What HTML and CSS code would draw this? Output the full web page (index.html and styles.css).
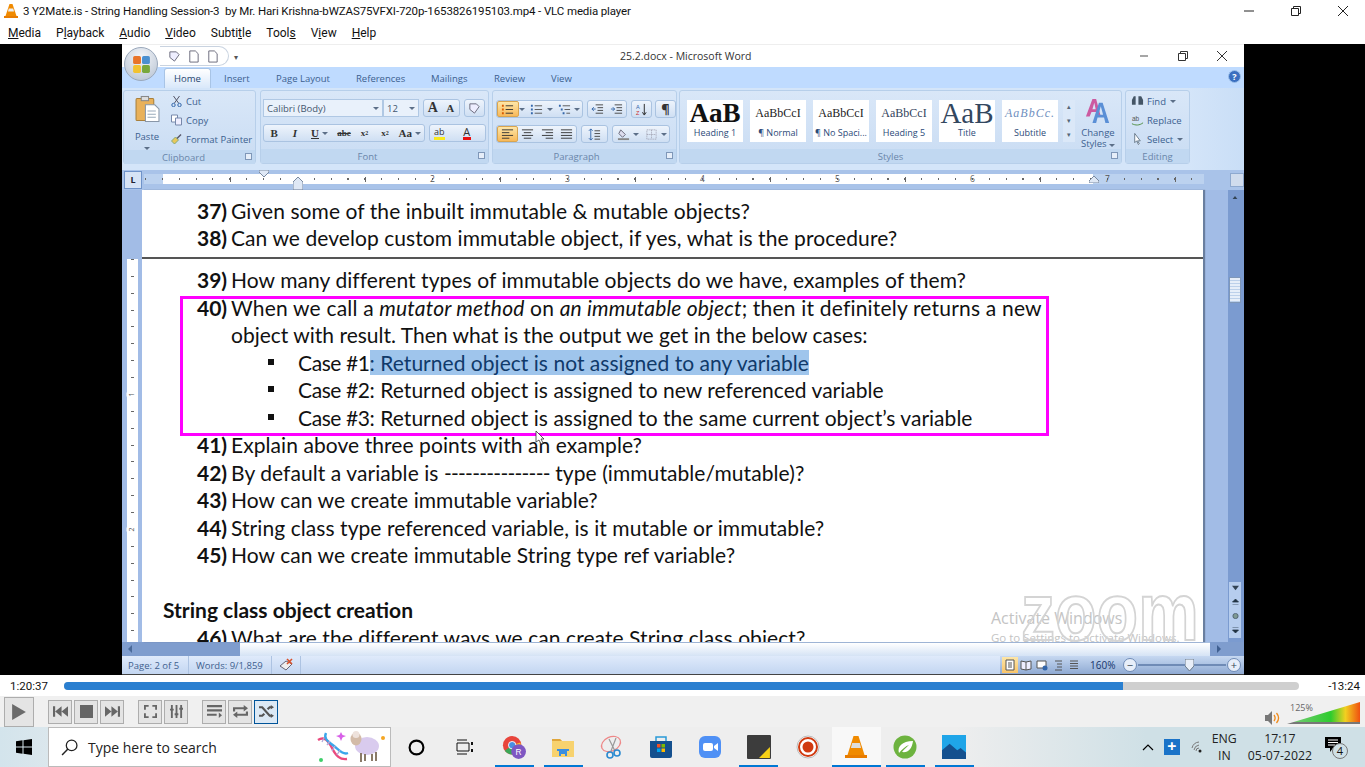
FILE: index.html
```html
<!DOCTYPE html>
<html lang="en">
<head>
    <meta charset="UTF-8">
    <meta name="viewport" content="width=device-width, initial-scale=1.0">
    <title>VLC media player</title>
    <link rel="stylesheet" href="styles.css">
</head>
<body>

    <div class="title-bar">
        <svg class="cone" viewBox="0 0 16 16"><path d="M6.5 1h3l4 12h-11z" fill="#f08a00"/><path d="M5.8 5.5h4.4l.8 3h-6z" fill="#eee"/><path d="M1 13h14v2H1z" fill="#e87c00"/></svg>
        <span class="title-text">3 Y2Mate.is - String Handling Session-3 &nbsp;by Mr. Hari Krishna-bWZAS75VFXI-720p-1653826195103.mp4 - VLC media player</span>
        <div class="win-btns">
            <svg viewBox="0 0 12 12"><path d="M1 6h10" stroke="#222"/></svg>
            <svg viewBox="0 0 12 12"><path d="M1.5 3.5h7v7h-7zM3.5 3.5v-2h7v7h-2" fill="none" stroke="#222"/></svg>
            <svg viewBox="0 0 12 12"><path d="M1 1l10 10M11 1L1 11" stroke="#222"/></svg>
        </div>
    </div>
    <nav class="menu-bar">
        <span><u>M</u>edia</span>
        <span>P<u>l</u>ayback</span>
        <span><u>A</u>udio</span>
        <span><u>V</u>ideo</span>
        <span>Subti<u>t</u>le</span>
        <span>Tool<u>s</u></span>
        <span>V<u>i</u>ew</span>
        <span><u>H</u>elp</span>
    </nav>

    <div class="video">
        <div class="word">
            <div class="word-title">
                <div class="office-btn">
                    <svg viewBox="0 0 20 20"><rect x="2" y="2" width="7.5" height="7.5" rx="1.5" fill="#e8742a"/><rect x="10.5" y="2" width="7.5" height="7.5" rx="1.5" fill="#4a8fd0"/><rect x="2" y="10.5" width="7.5" height="7.5" rx="1.5" fill="#f2c230"/><rect x="10.5" y="10.5" width="7.5" height="7.5" rx="1.5" fill="#78a83c"/></svg>
                </div>
                <div class="qat">
                    <svg viewBox="0 0 14 14"><path d="M2 2h7l3 3-5 7-5-4z" fill="#eef" stroke="#667"/></svg>
                    <svg viewBox="0 0 14 14"><path d="M3 1h6l3 3v9H3z" fill="#fff" stroke="#667"/></svg>
                    <svg viewBox="0 0 14 14"><path d="M3 1h6l3 3v9H3z" fill="#fff" stroke="#667"/></svg>
                </div>
                <span class="qat-more">&#9662;</span>
                <span class="doc-name">25.2.docx - Microsoft Word</span>
                <div class="word-btns">
                    <svg viewBox="0 0 12 12"><path d="M2 6h8" stroke="#888" stroke-width="1.5"/></svg>
                    <svg viewBox="0 0 12 12"><path d="M1.5 3.5h7v7h-7zM3.5 3.5v-2h7v7h-2" fill="none" stroke="#333"/></svg>
                    <svg viewBox="0 0 12 12"><path d="M1 1l10 10M11 1L1 11" stroke="#333"/></svg>
                </div>
            </div>

            <div class="tabs">
                <span class="tab active">Home</span>
                <span class="tab t-insert">Insert</span>
                <span class="tab t-layout">Page Layout</span>
                <span class="tab t-refs">References</span>
                <span class="tab t-mail">Mailings</span>
                <span class="tab t-review">Review</span>
                <span class="tab t-view">View</span>
                <span class="help">?</span>
            </div>

            <div class="ribbon">
                <section class="group g-clip">
                    <div class="group-body clip-body">
                        <div class="paste">
                            <svg viewBox="0 0 24 26"><rect x="1" y="3" width="17" height="21" rx="1" fill="#e9b15a" stroke="#a9803c"/><rect x="6" y="1" width="7" height="4" fill="#ddd" stroke="#888"/><path d="M10 9h9l4 4v12H10z" fill="#fff" stroke="#8896a8"/><path d="M12 15h8M12 18h8M12 21h8" stroke="#9ab"/></svg>
                            <span>Paste</span>
                            <i class="arrow"></i>
                        </div>
                        <div class="clip-list">
                            <span><svg viewBox="0 0 12 12"><path d="M3 1l5 7M9 1L4 8" stroke="#556"/><circle cx="3" cy="10" r="1.7" fill="none" stroke="#36a"/><circle cx="9" cy="10" r="1.7" fill="none" stroke="#36a"/></svg>Cut</span>
                            <span><svg viewBox="0 0 12 12"><path d="M1 1h6v7H1z" fill="#fff" stroke="#78a"/><path d="M5 4h6v7H5z" fill="#eef" stroke="#78a"/></svg>Copy</span>
                            <span><svg viewBox="0 0 12 12"><path d="M1 8l4-4 3 3-4 4z" fill="#e9c85a" stroke="#8a7"/><path d="M6 5l4-4 1 1-4 4z" fill="#556"/></svg>Format Painter</span>
                        </div>
                    </div>
                    <div class="group-label pad-clip">Clipboard<i class="launcher"></i></div>
                </section>

                <section class="group g-font">
                    <div class="group-body rows">
                        <div class="row">
                            <div class="combo c-name">Calibri (Body)<i class="arrow"></i></div>
                            <div class="combo c-size">12<i class="arrow"></i></div>
                            <div class="tb f-grow"><span class="tb-btn serif big">A</span><span class="tb-btn serif">A</span></div>
                            <div class="tb f-clear"><span class="tb-btn"><svg viewBox="0 0 14 14"><path d="M2 2h7l3 3-5 7-5-4z" fill="#eef" stroke="#667"/></svg></span></div>
                        </div>
                        <div class="row">
                            <div class="tb f-style">
                                <span class="tb-btn serif"><b>B</b></span>
                                <span class="tb-btn serif"><i>I</i></span>
                                <span class="tb-btn serif wide"><u>U</u>&nbsp;<i class="arrow"></i></span>
                                <span class="tb-btn serif small"><s>abe</s></span>
                                <span class="tb-btn serif small">x<sub>2</sub></span>
                                <span class="tb-btn serif small">x<sup>2</sup></span>
                                <span class="tb-btn serif wide">Aa&nbsp;<i class="arrow"></i></span>
                            </div>
                            <div class="tb f-color">
                                <span class="tb-btn hl">ab</span>
                                <span class="tb-btn fc">A</span>
                            </div>
                        </div>
                    </div>
                    <div class="group-label pad-font">Font<i class="launcher"></i></div>
                </section>

                <section class="group g-para">
                    <div class="group-body rows para-rows">
                        <div class="row">
                            <div class="tb p-lists">
                                <span class="tb-btn on"><svg viewBox="0 0 14 14"><path d="M1 3h2M1 7h2M1 11h2" stroke="#d85a00" stroke-width="2"/><path d="M5 3h8M5 7h8M5 11h8" stroke="#333"/></svg></span>
                                <i class="arrow list-arrow"></i>
                                <span class="tb-btn"><svg viewBox="0 0 14 14"><path d="M1 3h2M1 7h2M1 11h2" stroke="#36a" stroke-width="2"/><path d="M5 3h8M5 7h8M5 11h8" stroke="#555"/></svg></span>
                                <i class="arrow list-arrow"></i>
                                <span class="tb-btn"><svg viewBox="0 0 14 14"><path d="M1 3h2M3 7h2M5 11h2" stroke="#36a" stroke-width="2"/><path d="M5 3h8M7 7h6M9 11h4" stroke="#555"/></svg></span>
                                <i class="arrow list-arrow"></i>
                            </div>
                            <div class="tb p-indent">
                                <span class="tb-btn"><svg viewBox="0 0 14 14"><path d="M5 2h8M7 5h6M7 8h6M5 11h8" stroke="#444"/><path d="M5 6.5L1 6.5M3 4.5l-2 2 2 2" stroke="#36a" fill="none"/></svg></span>
                                <span class="tb-btn"><svg viewBox="0 0 14 14"><path d="M5 2h8M7 5h6M7 8h6M5 11h8" stroke="#444"/><path d="M1 6.5h4M3 4.5l2 2-2 2" stroke="#36a" fill="none"/></svg></span>
                            </div>
                            <div class="tb p-sort"><span class="tb-btn"><svg viewBox="0 0 14 14"><text x="1" y="6" font-size="6" fill="#36a" font-family="Liberation Sans">A</text><text x="1" y="13" font-size="6" fill="#c33" font-family="Liberation Sans">Z</text><path d="M10 1v11M8 10l2 3 2-3" stroke="#222" fill="none"/></svg></span></div>
                            <div class="tb p-mark"><span class="tb-btn pilcrow">&para;</span></div>
                        </div>
                        <div class="row">
                            <div class="tb p-align">
                                <span class="tb-btn on"><svg viewBox="0 0 14 14"><path d="M1 2h12M1 5h8M1 8h12M1 11h8" stroke="#333"/></svg></span>
                                <span class="tb-btn"><svg viewBox="0 0 14 14"><path d="M1 2h12M3 5h8M1 8h12M3 11h8" stroke="#333"/></svg></span>
                                <span class="tb-btn"><svg viewBox="0 0 14 14"><path d="M1 2h12M5 5h8M1 8h12M5 11h8" stroke="#333"/></svg></span>
                                <span class="tb-btn"><svg viewBox="0 0 14 14"><path d="M1 2h12M1 5h12M1 8h12M1 11h12" stroke="#333"/></svg></span>
                            </div>
                            <div class="tb p-space"><span class="tb-btn"><svg viewBox="0 0 14 14"><path d="M3 1v12M1 3l2-2 2 2M1 11l2 2 2-2" stroke="#36a" fill="none"/><path d="M7 3h6M7 6h6M7 9h6M7 12h6" stroke="#444"/></svg></span></div>
                            <div class="tb p-shade">
                                <span class="tb-btn"><svg viewBox="0 0 14 14"><path d="M4 2l5 5-3 3-4-4z" fill="#dde" stroke="#667"/><path d="M1 12h12" stroke="#888" stroke-width="2"/></svg></span>
                                <i class="arrow list-arrow"></i>
                                <span class="tb-btn"><svg viewBox="0 0 14 14"><path d="M2 2h10v10H2zM7 2v10M2 7h10" fill="none" stroke="#99a" stroke-dasharray="1 1"/></svg></span>
                                <i class="arrow list-arrow"></i>
                            </div>
                        </div>
                    </div>
                    <div class="group-label pad-para">Paragraph<i class="launcher"></i></div>
                </section>

                <section class="group g-styles">
                    <div class="group-body styles-body">
                        <div class="gallery">
                            <div class="swatch"><span class="s-h1">AaB</span><small>Heading 1</small></div>
                            <div class="swatch"><span class="s-n">AaBbCcI</span><small>&para; Normal</small></div>
                            <div class="swatch"><span class="s-n">AaBbCcI</span><small>&para; No Spaci...</small></div>
                            <div class="swatch"><span class="s-n s-h5">AaBbCcI</span><small>Heading 5</small></div>
                            <div class="swatch"><span class="s-title">AaB</span><small>Title</small></div>
                            <div class="swatch"><span class="s-sub">AaBbCc.</span><small>Subtitle</small></div>
                        </div>
                        <div class="gal-scroll"><i>&#9652;</i><i>&#9662;</i><i>&#9662;</i></div>
                        <div class="change">
                            <svg viewBox="0 0 28 28"><path fill-rule="evenodd" d="M1 20L8 1h4l5 19h-4l-1-5H7l-2 5zM8 12h3.500L10 5z" fill="#cc5aa0"/><path fill-rule="evenodd" d="M8 27L15 5h4l7 22h-4l-1.500-6h-7L12 27zM14.500 18h5L17 9z" fill="#5a8fd6"/></svg>
                            <span>Change</span>
                            <span>Styles <i class="arrow"></i></span>
                        </div>
                    </div>
                    <div class="group-label pad-styles">Styles<i class="launcher"></i></div>
                </section>

                <section class="group g-edit">
                    <div class="group-body edit-list">
                        <span><svg viewBox="0 0 14 12"><path d="M1 10V5l2-4h2v9zM8 10V1h3l2 4v5z" fill="#456" /></svg>Find <i class="arrow"></i></span>
                        <span><svg viewBox="0 0 14 12"><path d="M1 10c4 2 8 2 12-1" stroke="#4a8a3a" fill="none"/><text x="1" y="7" font-size="7" fill="#555" font-family="Liberation Sans">ab</text></svg>Replace</span>
                        <span><svg viewBox="0 0 14 12"><path d="M4 0v10l2-2 2 4 1-1-2-3h3z" fill="#fff" stroke="#678"/></svg>Select <i class="arrow"></i></span>
                    </div>
                    <div class="group-label">Editing</div>
                </section>
            </div>

            <div class="ruler-row">
                <span class="tab-stop">L</span>
                <div class="ruler">
                    <span>2</span><span>3</span><span>4</span><span>5</span><span>6</span><span>7</span>
                    <svg class="mark m-first" viewBox="0 0 10 7"><path d="M0 0h10v2L5 7 0 2z" fill="#dfe8f5" stroke="#7a8aa0"/></svg>
                    <svg class="mark m-left" viewBox="0 0 10 13"><path d="M5 0l5 5v8H0V5z" fill="#dfe8f5" stroke="#7a8aa0"/></svg>
                    <svg class="mark m-right" viewBox="0 0 10 7"><path d="M5 0l5 5v2H0V5z" fill="#dfe8f5" stroke="#7a8aa0"/></svg>
                </div>
                <span class="view-ruler"></span>
            </div>

            <div class="doc-row">
                <div class="v-ruler"><span class="v1">1</span><span class="v2">2</span></div>
                <div class="doc">
                    <div class="page-end">
                        <p class="q"><b>37)</b><span>Given some of the inbuilt immutable &amp; mutable objects?</span></p>
                        <p class="q"><b>38)</b><span>Can we develop custom immutable object, if yes, what is the procedure?</span></p>
                    </div>
                    <div class="page-start">
                        <p class="q"><b>39)</b><span>How many different types of immutable objects do we have, examples of them?</span></p>
                        <p class="q"><b>40)</b><span><span class="stretch">When we call a <i>mutator method</i> on <i>an immutable object</i>; then it definitely returns a new</span><br><span class="tight">object with result. Then what is the output we get in the below cases:</span></span></p>
                        <ul class="cases">
                            <li><span class="case-no">Case #1</span><mark>: Returned object is not assigned to any variable</mark></li>
                            <li><span class="case-no">Case #2</span>: Returned object is assigned to new referenced variable</li>
                            <li><span class="case-no">Case #3</span>: Returned object is assigned to the same current object&rsquo;s variable</li>
                        </ul>
                        <p class="q"><b>41)</b><span>Explain above three points with an example?</span></p>
                        <p class="q"><b>42)</b><span>By default a variable is <span class="dashes">---------------</span> type (immutable/mutable)?</span></p>
                        <p class="q"><b>43)</b><span>How can we create immutable variable?</span></p>
                        <p class="q"><b>44)</b><span>String class type referenced variable, is it mutable or immutable?</span></p>
                        <p class="q"><b>45)</b><span>How can we create immutable String type ref variable?</span></p>
                        <h2 class="doc-head">String class object creation</h2>
                        <p class="q"><b>46)</b><span>What are the different ways we can create String class object?</span></p>
                    </div>
                    <div class="pink-box"></div>
                    <svg class="doc-cursor" viewBox="0 0 10 15"><path d="M1 1v11l3-2 2 4 2-1-2-4h3z" fill="#fff" stroke="#333" stroke-width=".8"/></svg>
                    <div class="activate">Activate Windows<small>Go to Settings to activate Windows.</small></div>
                    <div class="zoom-mark">zoom</div>
                </div>
                <div class="gutter"></div>
                <div class="v-scroll">
                    <svg class="vs-top" viewBox="0 0 8 5"><path d="M0 5l4-5 4 5z" fill="#345"/></svg>
                    <div class="vs-thumb"></div>
                    <div class="vs-bottom">
                        <svg viewBox="0 0 8 5"><path d="M0 0l4 5 4-5z" fill="#345"/></svg>
                        <svg viewBox="0 0 8 8"><path d="M0 4l4-4 4 4zM0 8h8" fill="#234" stroke="#234"/></svg>
                        <svg viewBox="0 0 8 8"><circle cx="4" cy="4" r="3.5" fill="#7e9a94" stroke="#456"/></svg>
                        <svg viewBox="0 0 8 8"><path d="M0 4l4 4 4-4zM0 0h8" fill="#234" stroke="#234"/></svg>
                    </div>
                </div>
            </div>

            <div class="h-scroll">
                <div class="hs-left"><i></i></div>
                <div class="hs-thumb"></div>
                <div class="hs-right"><i></i></div>
            </div>

            <div class="status">
                <span class="st-cell st-page">Page: 2 of 5</span>
                <span class="st-cell st-words">Words: 9/1,859</span>
                <span class="st-cell st-check"><svg viewBox="0 0 16 14"><path d="M2 8l6-5 6 3-6 6z" fill="#eee" stroke="#667"/><path d="M9 1l5 5M14 1L9 6" stroke="#d8502a" stroke-width="1.6"/></svg></span>
                <div class="st-right">
                    <div class="views">
                        <span class="on"><svg viewBox="0 0 12 12"><path d="M2 1h8v10H2zM4 4h4M4 6h4M4 8h4" fill="#fff" stroke="#555"/></svg></span>
                        <span><svg viewBox="0 0 12 12"><path d="M1 2l5 1 5-1v8l-5 1-5-1zM6 3v8" fill="#eef" stroke="#555"/></svg></span>
                        <span><svg viewBox="0 0 12 12"><path d="M1 2h9v7H1z" fill="#fff" stroke="#555"/><circle cx="9" cy="9" r="2.5" fill="#36a"/></svg></span>
                        <span><svg viewBox="0 0 12 12"><path d="M3 2h7M5 5h5M5 8h5M3 11h7" stroke="#555"/></svg></span>
                        <span><svg viewBox="0 0 12 12"><path d="M2 2h8M2 4.5h8M2 7h8M2 9.500h8" stroke="#555"/></svg></span>
                    </div>
                    <span class="zoom-pct">160%</span>
                    <span class="zoom-round">&minus;</span>
                    <div class="zoom-track"><svg viewBox="0 0 9 12"><path d="M0 0h9v7l-4.500 5L0 7z" fill="#e8eef8" stroke="#678"/></svg></div>
                    <span class="zoom-round">+</span>
                </div>
            </div>
        </div>
    </div>

    <div class="seek-row">
        <span class="time">1:20:37</span>
        <div class="seek"><div class="seek-fill"></div></div>
        <span class="time remain">-13:24</span>
    </div>

    <div class="controls">
        <span class="ctl play"><svg viewBox="0 0 14 14"><path d="M1 0l12 7-12 7z" fill="#6b6b6b"/></svg></span>
        <div class="ctl-group">
            <span class="ctl"><svg viewBox="0 0 14 10"><path d="M0 0h2v10H0zM8 0v10L2 5zM14 0v10L8 5z" fill="#666"/></svg></span>
            <span class="ctl"><svg viewBox="0 0 10 10"><path d="M0 0h10v10H0z" fill="#666"/></svg></span>
            <span class="ctl"><svg viewBox="0 0 14 10"><path d="M12 0h2v10h-2zM6 0v10l6-5zM0 0v10l6-5z" fill="#666"/></svg></span>
        </div>
        <div class="ctl-group">
            <span class="ctl"><svg viewBox="0 0 14 14"><path d="M1 5V1h4M9 1h4v4M13 9v4H9M5 13H1V9" fill="none" stroke="#666" stroke-width="2"/></svg></span>
            <span class="ctl"><svg viewBox="0 0 16 14"><path d="M3 0v14M8 0v14M13 0v14" stroke="#666" stroke-width="2"/><path d="M1 4h4v2H1zM6 9h4v2H6zM11 3h4v2h-4z" fill="#666"/></svg></span>
        </div>
        <div class="ctl-group">
            <span class="ctl"><svg viewBox="0 0 14 12"><path d="M0 1h14M0 5h14M0 9h9" stroke="#666" stroke-width="2"/><path d="M11 7l3 2.500-3 2.500z" fill="#666"/></svg></span>
            <span class="ctl"><svg viewBox="0 0 14 12"><path d="M1 6V3h10M13 6v3H3" fill="none" stroke="#666" stroke-width="2"/><path d="M10 0l4 3-4 3zM4 6l-4 3 4 3z" fill="#666"/></svg></span>
            <span class="ctl ctl-on"><svg viewBox="0 0 14 12"><path d="M0 2h3l7 8h2M0 10h3l2-2M8 4l2-2h2" fill="none" stroke="#555" stroke-width="2"/><path d="M11 0l3 2-3 2zM11 8l3 2-3 2z" fill="#555"/></svg></span>
        </div>
        <div class="volume">
            <svg class="spk" viewBox="0 0 15 14"><path d="M0 4h3l4-4v14l-4-4H0z" fill="#777"/><path d="M9 4c1.500 2 1.500 4 0 6M11.500 2c2.500 3 2.500 7 0 10" fill="none" stroke="#ef8a1a" stroke-width="1.300"/></svg>
            <div class="vol-wrap">
                <span class="vol-pct">125%</span>
                <div class="vol-bar"></div>
            </div>
        </div>
    </div>

    <footer class="taskbar">
        <div class="start">
            <svg viewBox="0 0 16 16"><path d="M0 2.200L6.500 1.300V7.500H0zM7.500 1.200L16 0V7.500H7.500zM0 8.500H6.500V14.700L0 13.800zM7.500 8.500H16V16L7.500 14.800z" fill="#000"/></svg>
        </div>
        <div class="search">
            <svg viewBox="0 0 16 16"><circle cx="10" cy="6" r="5" fill="none" stroke="#222" stroke-width="1.200"/><path d="M6.500 9.500L1 15" stroke="#222" stroke-width="1.400"/></svg>
            <span>Type here to search</span>
            <svg class="doodle" viewBox="0 0 68 32">
                <path d="M1 9c6-4 10 0 14 8s8 12 15 11" stroke="#ea4a7e" stroke-width="2.400" fill="none"/>
                <path d="M9 2c-3 6 3 9 8 13s9 9 14 7" stroke="#3aa6ea" stroke-width="2.400" fill="none"/>
                <path d="M7 7l-2 4M13 10l-3 4M18 15l-3 5M23 19l-3 5" stroke="#b5a8d8" stroke-width="1.300"/>
                <path d="M24 1l1.500 3L29 5l-3.500 1.500L24 10l-1.500-3.500L19 5l3.500-1z" fill="#d860e8"/>
                <circle cx="4" cy="29" r="2" fill="#3ecf6a"/>
                <ellipse cx="50" cy="15" rx="12" ry="9" fill="#d9cbee"/>
                <ellipse cx="39" cy="8" rx="5.500" ry="6.500" fill="#d3bba8"/>
                <circle cx="39" cy="3.500" r="3.500" fill="#eee2dc"/>
                <path d="M44 22v9M48 23v7M55 23v7M59 21v9" stroke="#8a7a68" stroke-width="2"/>
                <circle cx="66" cy="7" r="2" fill="#f5a623"/>
            </svg>
        </div>
        <div class="task-icons">
            <span class="task"><svg class="ring" viewBox="0 0 16 16"><circle cx="8" cy="8" r="6.500" fill="none" stroke="#000" stroke-width="2"/></svg></span>
            <span class="task"><svg class="task-view" viewBox="0 0 18 16"><path d="M1 1h10M1 4h12v8H1zM1 15h10" fill="none" stroke="#111"/><path d="M15 3h2v3h-2zM15 10h2v3h-2z" fill="#111"/></svg></span>
            <span class="task on"><svg viewBox="0 0 26 26"><circle cx="11" cy="11" r="10" fill="#e8453c"/><path d="M11 11L3 17a10 10 0 0 0 9 4z" fill="#3aa757"/><path d="M11 11l9-3a10 10 0 0 1-6 12z" fill="#fbc02d"/><circle cx="11" cy="11" r="4" fill="#4a90e2" stroke="#fff"/><circle cx="18" cy="18" r="8" fill="#7e57c2"/><text x="18" y="21.500" font-size="9" fill="#fff" text-anchor="middle" font-family="Liberation Sans">R</text></svg></span>
            <span class="task on part"><svg viewBox="0 0 24 22"><path d="M1 3h8l2 2h12v16H1z" fill="#f7d26e"/><path d="M1 3h8l2 2H1z" fill="#e0a63a"/><path d="M8 15h8v5h-2v-2h-4v2H8z" fill="#3a8ee0"/><path d="M6 13h12v2H6z" fill="#3a8ee0"/></svg></span>
            <span class="task"><svg viewBox="0 0 24 24"><ellipse cx="11" cy="9" rx="10" ry="7" fill="none" stroke="#e88" stroke-width="1.200" transform="rotate(-25 11 9)"/><path d="M9 4l6 12M16 3l-5 13" stroke="#999" stroke-width="1.200"/><circle cx="17" cy="18" r="3" fill="none" stroke="#2a8ad0" stroke-width="1.600"/><circle cx="10" cy="20" r="3" fill="none" stroke="#2a8ad0" stroke-width="1.600"/></svg></span>
            <span class="task"><svg viewBox="0 0 24 24"><path d="M1 6h22v15a2 2 0 0 1-2 2H3a2 2 0 0 1-2-2z" fill="#14508e"/><path d="M7 6V2h10v4" fill="none" stroke="#2a9ad8" stroke-width="1.500"/><path d="M8 9h3.500v3.500H8z" fill="#f25022"/><path d="M12.500 9H16v3.500h-3.500z" fill="#7fba00"/><path d="M8 13.500h3.500V17H8z" fill="#00a4ef"/><path d="M12.500 13.500H16V17h-3.500z" fill="#ffb900"/></svg></span>
            <span class="task"><svg viewBox="0 0 24 24"><rect x="1" y="1" width="22" height="22" rx="6" fill="#4f90f5"/><rect x="5" y="8" width="10" height="8" rx="2" fill="#fff"/><path d="M16 11l4-3v8l-4-3z" fill="#fff"/></svg></span>
            <span class="task on part"><svg viewBox="0 0 22 22"><rect width="22" height="22" rx="1" fill="#3c3c3c"/><path d="M21 11v10H11z" fill="#f7d117"/></svg></span>
            <span class="task"><svg viewBox="0 0 24 24"><circle cx="12" cy="12" r="11" fill="#fff" stroke="#bbb"/><circle cx="12" cy="12" r="9" fill="none" stroke="#d03a10" stroke-width="2"/><circle cx="12" cy="12" r="5.500" fill="#d03a10"/></svg></span>
            <span class="task on active"><svg viewBox="0 0 22 24"><path d="M8.500 1h5l6 19h-17z" fill="#f08a00"/><path d="M7.200 8h7.600l1.300 5H5.900z" fill="#ddd"/><path d="M0 20h22v3H0z" fill="#e87c00"/></svg></span>
            <span class="task on"><svg viewBox="0 0 24 24"><circle cx="12" cy="12" r="11.500" fill="#6db33f"/><path d="M6 18c-2-6 3-12 14-12-1 8-5 12-11 11 2-3 5-5 7-7-3 1-7 4-10 8z" fill="#fff"/></svg></span>
            <span class="task on"><svg viewBox="0 0 22 22"><rect width="22" height="22" fill="#1fa5e8"/><path d="M0 22V14l7-6 7 6 3-2 5 4v6z" fill="#14508e"/></svg></span>
        </div>
        <div class="tray">
            <svg class="caret" viewBox="0 0 12 7"><path d="M1 6l5-5 5 5" fill="none" stroke="#000" stroke-width="1.200"/></svg>
            <span class="plus">+</span>
            <svg class="wifi" viewBox="0 0 14 14"><path d="M1 8a8 8 0 0 1 7-6M3 10a6 6 0 0 1 5-5M5 11a3 3 0 0 1 3-3" fill="none" stroke="#777"/><circle cx="9" cy="11" r="1.500" fill="#222"/></svg>
            <div class="tray-text lang"><span>ENG</span><span>IN</span></div>
            <div class="tray-text clock"><span>17:17</span><span>05-07-2022</span></div>
            <div class="notify">
                <svg viewBox="0 0 16 16"><path d="M0 0h16v11H8l-3 4v-4H0z" fill="#000"/><path d="M3 3h10M3 5.500h10M3 8h7" stroke="#fff"/></svg>
                <span class="badge">4</span>
            </div>
        </div>
    </footer>

</body>
</html>
```

FILE: styles.css
```css
* {
    box-sizing: border-box;
}

html, body {
    margin: 0;
    width: 1365px;
    height: 767px;
    overflow: hidden;
}

body {
    font-family: "Open Sans", "Liberation Sans", sans-serif;
    font-size: 12px;
    background-color: #f0f0f0;
    color: #111;
}

svg {
    display: block;
}

/* vlc window top */
.title-bar {
    display: flex;
    align-items: center;
    height: 22px;
    background-color: #fff;
    padding-left: 3px;
    font-family: "Roboto", sans-serif;
}

.cone {
    width: 16px;
    height: 16px;
    margin-right: 4px;
}

.title-text {
    font-size: 11.500px;
    letter-spacing: -.12px;
    white-space: pre;
}

.win-btns {
    display: flex;
    margin-left: auto;
    gap: 35px;
    padding-right: 16px;
}

.win-btns svg {
    width: 12px;
    height: 12px;
}

.menu-bar {
    display: flex;
    align-items: center;
    gap: 15px;
    height: 22px;
    background-color: #fff;
    padding-left: 8px;
    font-family: "Roboto", sans-serif;
    font-size: 12px;
}

/* video area */
.video {
    display: flex;
    justify-content: flex-start;
    height: 631px;
    background-color: #000;
    padding-left: 122px;
}

.word {
    display: flex;
    flex-direction: column;
    width: 1122px;
    height: 631px;
    background-color: #bfdbff;
}

.word-title {
    display: flex;
    align-items: center;
    position: relative;
    height: 23px;
    flex-shrink: 0;
    background-color: #fff;
    border-top: 1px solid #eee;
}

.office-btn {
    position: absolute;
    left: 2px;
    top: 2px;
    width: 34px;
    height: 34px;
    display: flex;
    align-items: center;
    justify-content: center;
    border-radius: 50%;
    background: radial-gradient(circle at 50% 30%, #f4f6fa, #b4c0d0);
    border: 1px solid #9aa8bb;
    z-index: 2;
}

.office-btn svg {
    width: 21px;
    height: 21px;
}

.qat {
    display: flex;
    align-items: center;
    gap: 6px;
    height: 20px;
    margin-left: 38px;
    padding: 0 9px 0 8px;
    border: 1px solid #c9d3e0;
    border-left: 0;
    border-radius: 0 12px 12px 0;
}

.qat svg {
    width: 13px;
    height: 13px;
}

.qat-more {
    margin-left: 5px;
    font-size: 8px;
    color: #555;
}

.doc-name {
    position: absolute;
    left: 498px;
    font-size: 10.500px;
    color: #333;
}

.word-btns {
    display: flex;
    gap: 27px;
    margin-left: auto;
    padding-right: 16px;
}

.word-btns svg {
    width: 12px;
    height: 12px;
}

.tabs {
    position: relative;
    height: 21px;
    flex-shrink: 0;
    background-color: #bfdbff;
    font-size: 9.500px;
    color: #3c5f8f;
}

.tab {
    position: absolute;
    top: 5px;
}

.tab.active {
    left: 42px;
    top: 1px;
    width: 47px;
    height: 20px;
    line-height: 19px;
    text-align: center;
    color: #26456f;
    background: linear-gradient(#fff, #d9e8fa);
    border: 1px solid #a8c4e6;
    border-bottom: 0;
    border-radius: 3px 3px 0 0;
}

.t-insert { left: 102px; }
.t-layout { left: 154px; }
.t-refs { left: 234px; }
.t-mail { left: 309px; }
.t-review { left: 372px; }
.t-view { left: 429px; }

.help {
    position: absolute;
    right: 3px;
    top: 3px;
    width: 13px;
    height: 13px;
    border-radius: 50%;
    background-color: #3a6fc0;
    border: 1px solid #9cc0ea;
    color: #fff;
    font-size: 9px;
    font-weight: 700;
    line-height: 11px;
    text-align: center;
}

.ribbon {
    display: flex;
    height: 82px;
    flex-shrink: 0;
    padding: 2px 0 0 1px;
    background: linear-gradient(90deg, #d4e5f9, #d4e5f9 95%, #c9def6);
    color: #3c5f8f;
    font-size: 9.500px;
}

.group {
    display: flex;
    flex-direction: column;
    height: 74px;
    background: linear-gradient(#d9e7f8, #c9dcf3);
    border: 1px solid #b7cfea;
    border-radius: 3px;
}

.group-body {
    flex: 1;
}

.group-label {
    position: relative;
    height: 14px;
    background-color: #c1d8f1;
    text-align: center;
    line-height: 15px;
    color: #6a86aa;
}

.pad-clip { padding-right: 12px; }
.pad-font { padding-right: 14px; }
.pad-para { padding-right: 16px; }
.pad-styles { padding-right: 20px; }

.launcher {
    position: absolute;
    right: 3px;
    top: 3px;
    width: 7px;
    height: 7px;
    border: 1px solid #7f97b8;
    background-color: #e6eef9;
}

.arrow {
    display: inline-block;
    width: 0;
    height: 0;
    border-left: 3px solid transparent;
    border-right: 3px solid transparent;
    border-top: 3px solid #5c6f88;
}

.list-arrow {
    align-self: center;
    flex-shrink: 0;
    margin-right: 2px;
}

.g-clip { width: 133px; margin-right: 4px; }
.g-font { width: 229px; margin-right: 3px; }
.g-para { width: 185px; margin-right: 2px; }
.g-styles { width: 443px; margin-right: 3px; }
.g-edit { width: 65px; }

.clip-body {
    display: flex;
}

.paste {
    display: flex;
    flex-direction: column;
    align-items: center;
    width: 46px;
    padding-top: 4px;
}

.paste svg {
    width: 25px;
    height: 28px;
    margin-bottom: 7px;
}

.paste .arrow {
    margin-top: 4px;
}

.clip-list, .edit-list {
    display: flex;
    flex-direction: column;
    gap: 5px;
    padding-top: 3px;
}

.clip-list span, .edit-list span {
    display: flex;
    align-items: center;
    gap: 3px;
    height: 14px;
    white-space: nowrap;
}

.clip-list svg, .edit-list svg {
    width: 13px;
    height: 12px;
}

.edit-list {
    padding-left: 5px;
}

.edit-list .arrow {
    margin-left: 1px;
}

.rows {
    display: flex;
    flex-direction: column;
    gap: 7px;
    padding: 8px 0 0 2px;
}

.para-rows {
    padding: 9px 0 0 3px;
}

.row {
    display: flex;
    gap: 4px;
    height: 18px;
}

.combo {
    display: flex;
    align-items: center;
    justify-content: space-between;
    padding: 0 3px;
    background-color: #e9f1fb;
    border: 1px solid #b0c8e4;
    color: #44566e;
    font-size: 9.500px;
}

.c-name { width: 120px; }
.c-size { width: 36px; margin-left: -4px; }

.tb {
    display: flex;
    background: linear-gradient(#eef4fc, #cfdff3);
    border: 1px solid #aac3e1;
    border-radius: 3px;
}

.tb-btn {
    display: flex;
    flex: 1;
    align-items: center;
    justify-content: center;
    color: #333;
    font-size: 11px;
}

.tb-btn svg {
    width: 13px;
    height: 13px;
}

.tb-btn.on {
    background: linear-gradient(#fde6a8, #f8b95a);
    border: 1px solid #d9a550;
    border-radius: 2px;
}

.serif {
    font-family: "Liberation Serif", serif;
    font-weight: 700;
}

.big { font-size: 14px; }
.small { font-size: 9px; }
.wide { flex: 1.4; }
.small sub, .small sup { font-size: 6px; }

.hl {
    border-bottom: 3px solid #f7e81f;
    font-size: 9px;
    margin: 1px 14px 1px 4px;
}

.fc {
    border-bottom: 3px solid #e81010;
    margin: 1px 14px 1px 4px;
    color: #333;
}

.f-grow { width: 37px; }
.f-clear { width: 21px; }
.f-style { width: 162px; }
.f-color { width: 57px; }

.p-lists { width: 88px; }
.p-indent { width: 40px; }
.p-sort { width: 21px; }
.p-mark { width: 21px; margin-left: -1px; }
.pilcrow { font-size: 13px; font-weight: 700; color: #333; }
.p-align { width: 81px; }
.p-space { width: 27px; }
.p-shade { width: 58px; }

.styles-body {
    display: flex;
    padding: 9px 0 0 7px;
}

.gallery {
    display: flex;
    gap: 7px;
}

.swatch {
    display: flex;
    flex-direction: column;
    align-items: center;
    width: 56px;
    height: 42px;
    background-color: #fff;
    overflow: hidden;
}

.swatch span {
    height: 26px;
    line-height: 26px;
    font-family: "Liberation Serif", serif;
    white-space: nowrap;
}

.swatch small {
    font-size: 9px;
    color: #2c4a78;
    white-space: nowrap;
}

.s-h1 { font-size: 27px; font-weight: 700; color: #111; }
.s-n { font-size: 12px; color: #222; }
.s-h5 { color: #33445c; }
.s-title { font-size: 29px; color: #33475f; }
.s-sub { font-size: 12px; font-style: italic; color: #6f8fc0; letter-spacing: 1px; }

.gal-scroll {
    display: flex;
    flex-direction: column;
    width: 12px;
    height: 42px;
    margin-left: 5px;
    font-size: 7px;
    text-align: center;
    line-height: 14px;
    background-color: #dbe8f8;
    color: #567;
}

.gal-scroll i {
    font-style: normal;
    height: 14px;
}

.change {
    display: flex;
    flex-direction: column;
    align-items: center;
    width: 42px;
    margin-left: 2px;
    line-height: 11px;
}

.change svg {
    width: 28px;
    height: 26px;
    margin-bottom: 3px;
    margin-top: -2px;
}

/* rulers and page */
.ruler-row {
    display: flex;
    align-items: center;
    height: 20px;
    flex-shrink: 0;
    background-color: #a9c3e9;
    padding-left: 2px;
}

.tab-stop {
    width: 18px;
    height: 18px;
    background-color: #d6e3f5;
    border: 1px solid #6f93c9;
    font-size: 9px;
    font-weight: 700;
    line-height: 16px;
    text-align: center;
    color: #223;
}

.ruler {
    position: relative;
    display: flex;
    align-self: flex-start;
    width: 1061px;
    height: 10px;
    margin: 4px 0 0 2px;
    padding-left: 221px;
    font-size: 8.500px;
    line-height: 10px;
    color: #555;
    background-color: #bcd2ef;
    background-image:
        repeating-linear-gradient(90deg, #666 0 1px, transparent 1px 135px),
        repeating-linear-gradient(90deg, #666 0 1px, transparent 1px 16.875px),
        linear-gradient(#fff, #fff);
    background-size: 1000px 5px, 100% 2px, 930px 100%;
    background-position: 86px center, 1.500px center, 19px 0;
    background-repeat: no-repeat;
}

.ruler span {
    width: 135px;
    text-align: center;
}

.mark {
    position: absolute;
}

.m-first { left: 115px; top: -4px; width: 10px; height: 7px; }
.m-left { left: 149px; top: 3px; width: 10px; height: 13px; }
.m-right { left: 945px; top: 2px; width: 10px; height: 7px; }

.view-ruler {
    width: 14px;
    height: 14px;
    margin-left: 26px;
    background-color: #d0dced;
    border: 1px solid #8ea9cf;
}

.doc-row {
    display: flex;
    height: 452px;
    flex-shrink: 0;
    background-color: #a2bce6;
}

.v-ruler {
    position: relative;
    width: 20px;
    flex-shrink: 0;
}

.v-ruler::after {
    content: "";
    position: absolute;
    left: 5px;
    top: 69px;
    bottom: 0;
    width: 11px;
    background-color: #fff;
    background-image: repeating-linear-gradient(#666 0 1px, transparent 1px 16.875px);
    background-size: 3px 100%;
    background-position: center;
    background-repeat: no-repeat;
}

.v-ruler span {
    position: absolute;
    left: 7px;
    z-index: 1;
    font-size: 7px;
    background-color: #fff;
    color: #555;
    transform: rotate(-90deg);
}

.v1 { top: 200px; }
.v2 { top: 335px; }

.doc {
    position: relative;
    width: 1061px;
    flex-shrink: 0;
    padding-left: 55px;
    overflow: hidden;
    background-color: #fff;
    box-shadow: 2px 0 1px #6a7f9f;
    font-family: "Lato", "Liberation Sans", sans-serif;
    font-size: 21px;
    line-height: 27.5px;
    color: #111;
}

.page-end {
    margin-left: -55px;
    padding: 6.5px 0 5.5px 55px;
    border-bottom: 2px solid #555;
}

.page-start {
    padding-top: 7px;
}

.q {
    display: flex;
    margin: 0;
    white-space: nowrap;
}

.q span {
    letter-spacing: .07px;
}

.q .stretch {
    letter-spacing: .19px;
}

.q .tight {
    letter-spacing: 0;
}

.q .dashes {
    letter-spacing: -.75px;
}

.q b {
    width: 34px;
    flex-shrink: 0;
}

.cases {
    margin: 0;
    padding: 0 0 0 101px;
    list-style: none;
    letter-spacing: .03px;
}

.case-no {
    letter-spacing: -.4px;
}

.cases li {
    position: relative;
    white-space: nowrap;
}

.cases li::before {
    content: "";
    position: absolute;
    left: -30px;
    top: 10px;
    width: 6px;
    height: 6px;
    background-color: #111;
}

mark {
    background-color: #9fc5ec;
    color: #103a6a;
}

.doc-head {
    margin: 27.5px 0 0 -34px;
    font-size: 21px;
    line-height: 27.5px;
    font-weight: 700;
}

.pink-box {
    position: absolute;
    left: 38px;
    top: 106px;
    width: 869px;
    height: 140px;
    border: 3px solid #ff00ff;
}

.doc-cursor {
    position: absolute;
    left: 393px;
    top: 240px;
    width: 10px;
    height: 15px;
}

.activate {
    position: absolute;
    left: 849px;
    top: 418px;
    font-family: "Open Sans", sans-serif;
    font-size: 16px;
    line-height: 20px;
    color: #c4c4c4;
    white-space: nowrap;
}

.activate small {
    display: block;
    font-size: 11.5px;
}

.zoom-mark {
    position: absolute;
    left: 879px;
    top: 387px;
    font-family: "Liberation Sans", sans-serif;
    font-size: 82px;
    font-weight: 700;
    line-height: 70px;
    color: transparent;
    -webkit-text-stroke: 2px #d4d4d4;
    transform: scaleX(.83);
    transform-origin: left top;
}

.gutter {
    flex: 1;
}

.v-scroll {
    position: relative;
    width: 16px;
    flex-shrink: 0;
    background-color: #7b9bd0;
}

.vs-top {
    position: absolute;
    left: 3px;
    top: 6px;
    width: 8px;
    height: 3px;
}

.vs-thumb {
    position: absolute;
    left: 1px;
    top: 87px;
    width: 12px;
    height: 26px;
    background: repeating-linear-gradient(#e6eef9 0 2px, #bcd0ea 2px 3px);
    border: 1px solid #7f97b8;
}

.vs-bottom {
    position: absolute;
    left: 1px;
    bottom: 4px;
    display: flex;
    flex-direction: column;
    align-items: center;
    gap: 8px;
    width: 12px;
    height: 56px;
    background-color: #b6cdee;
    padding-top: 3px;
}

.vs-bottom svg {
    width: 7px;
    height: 6px;
}

.h-scroll {
    display: flex;
    height: 14px;
    flex-shrink: 0;
    background-color: #7f9dce;
}

.hs-left {
    width: 118px;
    padding: 3px 0 0 6px;
}

.hs-left i {
    display: block;
    width: 0;
    border-top: 4px solid transparent;
    border-bottom: 4px solid transparent;
    border-right: 4px solid #4a6a9a;
}

.hs-thumb {
    width: 970px;
    background: linear-gradient(#fff, #d5e3f5);
    border-top: 1px solid #a9c0e0;
}

.hs-right {
    width: 18px;
    padding: 3px 0 0 7px;
}

.hs-right i {
    display: block;
    width: 0;
    border-top: 4px solid transparent;
    border-bottom: 4px solid transparent;
    border-left: 4px solid #3f5f90;
}

.status {
    display: flex;
    flex: 1;
    align-items: center;
    background: linear-gradient(#dfeafb, #c3d6f1);
    font-size: 9.500px;
    color: #3f5f8e;
    border-bottom: 1px solid #444;
}

.st-cell {
    display: flex;
    align-items: center;
    height: 100%;
    padding-left: 6px;
    border-right: 1px solid #adc3e2;
}

.st-page { width: 67px; }
.st-words { width: 83px; padding-left: 7px; }
.st-check { width: 29px; }

.st-check svg {
    width: 16px;
    height: 14px;
}

.st-right {
    display: flex;
    align-items: center;
    height: 100%;
    margin-left: auto;
    width: 244px;
    padding-left: 2px;
    background: linear-gradient(#c6d8f1, #8faad3);
    font-size: 10px;
}

.views {
    display: flex;
    margin-right: 5px;
}

.views span {
    display: flex;
    align-items: center;
    justify-content: center;
    width: 16px;
    height: 16px;
}

.views span.on {
    background: linear-gradient(#fde6a8, #f8c46a);
}

.views svg {
    width: 12px;
    height: 12px;
}

.zoom-pct {
    width: 33px;
    margin-left: 3px;
    color: #15356b;
}

.zoom-round {
    width: 14px;
    height: 14px;
    flex-shrink: 0;
    border-radius: 50%;
    border: 1px solid #6f8bb6;
    background-color: #e7eef9;
    font-size: 11px;
    line-height: 11px;
    text-align: center;
    color: #345;
}

.zoom-track {
    position: relative;
    display: flex;
    justify-content: flex-end;
    align-items: center;
    width: 88px;
    height: 2px;
    margin: 0 1px;
    padding-right: 32px;
    background-color: #6f8bb6;
}

.zoom-track svg {
    width: 9px;
    height: 12px;
}

/* seek and buttons */
.seek-row {
    display: flex;
    align-items: center;
    height: 21px;
    padding: 0 5px 0 10px;
    background-color: #fff;
    font-family: "Roboto", sans-serif;
    font-size: 11.500px;
}

.time {
    width: 54px;
    flex-shrink: 0;
}

.remain {
    width: auto;
    margin-left: auto;
}

.seek {
    width: 1235px;
    height: 8px;
    border-radius: 4px;
    background-color: #cfcfcf;
    overflow: hidden;
}

.seek-fill {
    width: 1059px;
    height: 100%;
    background-color: #2a7fd0;
}

.controls {
    display: flex;
    align-items: center;
    gap: 14px;
    height: 31px;
    padding-left: 4px;
    background-color: #f0f0f0;
}

.ctl {
    display: flex;
    align-items: center;
    justify-content: center;
    width: 24px;
    height: 24px;
    background-color: #e4e4e4;
    border: 1px solid #adadad;
}

.ctl svg {
    width: 15px;
    height: 13px;
}

.ctl.play {
    width: 30px;
    height: 30px;
}

.ctl.play svg {
    width: 16px;
    height: 16px;
}

.ctl-group {
    display: flex;
    gap: 2px;
}

.ctl-on {
    border-color: #005499;
    background-color: #dce9f5;
}

.volume {
    display: flex;
    align-items: center;
    gap: 7px;
    margin-left: auto;
    padding-right: 5px;
}

.spk {
    width: 15px;
    height: 14px;
    margin-top: 12px;
}

.vol-wrap {
    position: relative;
    width: 73px;
    margin-top: 3px;
}

.vol-pct {
    position: absolute;
    left: 3px;
    top: -1px;
    font-size: 9px;
    color: #666;
}

.vol-bar {
    height: 22px;
    clip-path: polygon(0 100%, 100% 0, 100% 100%);
    background: linear-gradient(90deg, #7fc97f, #2ecc2e 60%, #f2d020 80%, #f05010);
    border-bottom: 2px solid #777;
}

/* windows taskbar */
.taskbar {
    display: flex;
    align-items: stretch;
    height: 40px;
    background: linear-gradient(90deg, #d3e4ec, #eeeeee 12%, #eeeeee 70%, #cfe0e6 84%);
}

.start {
    display: flex;
    align-items: center;
    justify-content: center;
    width: 48px;
}

.start svg {
    width: 16px;
    height: 16px;
}

.search {
    display: flex;
    align-items: center;
    width: 343px;
    padding-left: 12px;
    background-color: #fff;
    border: 1px solid #bbb;
    font-size: 14px;
    color: #222;
}

.search svg {
    width: 17px;
    height: 17px;
    margin-right: 10px;
}

.search .doodle {
    width: 68px;
    height: 32px;
    margin: 0 5px 0 auto;
}

.task-icons {
    display: flex;
    margin-left: 1px;
}

.task {
    position: relative;
    display: flex;
    align-items: center;
    justify-content: center;
    width: 48.9px;
}

.task svg {
    width: 24px;
    height: 24px;
}

.task .ring {
    width: 17px;
    height: 17px;
}

.task .task-view {
    width: 18px;
    height: 16px;
}

.task.on::after {
    content: "";
    position: absolute;
    left: 5px;
    right: 5px;
    bottom: 0;
    height: 2px;
    background-color: #0078d4;
}

.task.active {
    background-color: #f8f8f8;
}

.task.active::after {
    left: 0;
    right: 0;
}

.tray {
    display: flex;
    align-items: center;
    margin-left: auto;
    padding-right: 20px;
}

.caret {
    width: 12px;
    height: 7px;
}

.plus {
    width: 16px;
    height: 16px;
    margin-left: 10px;
    background-color: #1a73c8;
    color: #fff;
    font-size: 16px;
    font-weight: 700;
    line-height: 15px;
    text-align: center;
}

.wifi {
    width: 14px;
    height: 14px;
    margin-left: 11px;
}

.tray-text {
    display: flex;
    flex-direction: column;
    align-items: center;
    gap: 2px;
    font-size: 12.300px;
    line-height: 15px;
    color: #222;
}

.lang {
    margin-left: 7px;
}

.clock {
    margin-left: 11px;
}

.notify {
    position: relative;
    width: 20px;
    height: 20px;
    margin-left: 13px;
}

.notify svg {
    width: 16px;
    height: 16px;
}

.badge {
    position: absolute;
    left: 7px;
    top: 6px;
    width: 16px;
    height: 16px;
    border-radius: 50%;
    background-color: #cfe0e6;
    border: 1px solid #777;
    font-size: 11px;
    line-height: 14px;
    text-align: center;
}
```
